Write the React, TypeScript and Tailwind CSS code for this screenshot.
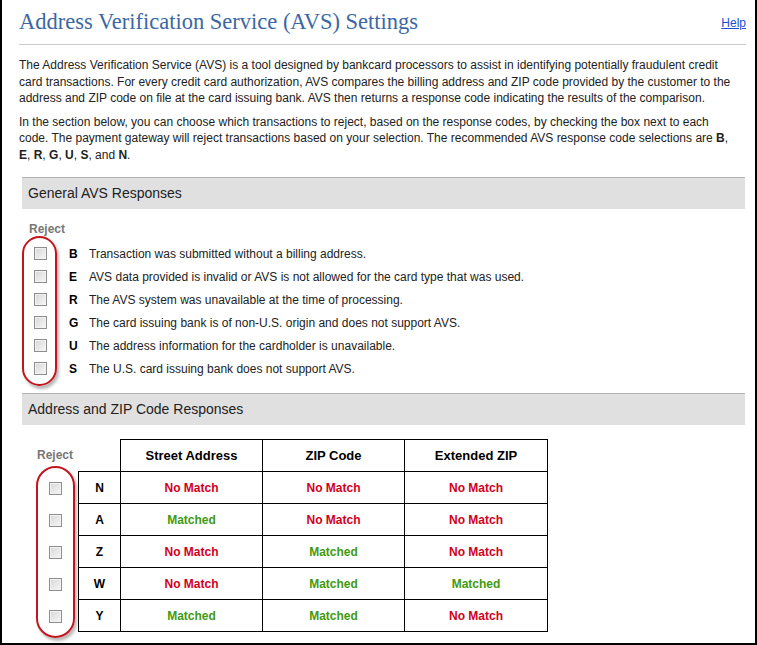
import React from "react";

const general = [
  { code: "B", text: "Transaction was submitted without a billing address." },
  { code: "E", text: "AVS data provided is invalid or AVS is not allowed for the card type that was used." },
  { code: "R", text: "The AVS system was unavailable at the time of processing." },
  { code: "G", text: "The card issuing bank is of non-U.S. origin and does not support AVS." },
  { code: "U", text: "The address information for the cardholder is unavailable." },
  { code: "S", text: "The U.S. card issuing bank does not support AVS." },
];

const zipRows: [string, boolean, boolean, boolean][] = [
  ["N", false, false, false],
  ["A", true, false, false],
  ["Z", false, true, false],
  ["W", false, true, true],
  ["Y", true, true, false],
];

function Box() {
  return (
    <span className="block w-[13px] h-[13px] border border-[#8e8e8e] bg-gradient-to-br from-[#d6d6d6] to-[#f8f8f8] shadow-[inset_0_0_0_1px_#f2f2f2]" />
  );
}

function Result({ ok }: { ok: boolean }) {
  return ok ? (
    <span className="text-[#3f9a12]">Matched</span>
  ) : (
    <span className="text-[#d2001c]">No Match</span>
  );
}

function SectionBar({ title }: { title: string }) {
  return (
    <div className="ml-[3px] mr-[1px] h-[32px] bg-[#e0e0e0] border-t border-[#b4b4b4] flex items-center pl-[6px] text-[14px] text-[#222]">
      {title}
    </div>
  );
}

export default function App() {
  return (
    <div className="w-[757px] h-[645px] overflow-hidden bg-white border-x-2 border-b-2 border-black font-['Liberation_Sans',Arial,sans-serif] text-[12px] text-[#222] pl-[17px] pr-[9px]">
      <div className="flex items-end justify-between pt-[8px] pb-[9px] border-b border-[#cccccc]">
        <h1 className="font-['Liberation_Serif',Georgia,serif] text-[22.5px] leading-[27px] text-[#3b67a4]">
          Address Verification Service (AVS) Settings
        </h1>
        <a href="#" className="text-[12px] text-[#1a4fd0] underline mb-[3px]">Help</a>
      </div>

      <p className="mt-[12px] leading-[16.5px] pr-[10px]">
        The Address Verification Service (AVS) is a tool designed by bankcard processors to assist in identifying potentially fraudulent credit card transactions. For every credit card authorization, AVS compares the billing address and ZIP code provided by the customer to the address and ZIP code on file at the card issuing bank. AVS then returns a response code indicating the results of the comparison.
      </p>
      <p className="mt-[7px] leading-[16.5px] pr-[10px]">
        In the section below, you can choose which transactions to reject, based on the response codes, by checking the box next to each code. The payment gateway will reject transactions based on your selection. The recommended AVS response code selections are <b>B</b>, <b>E</b>, <b>R</b>, <b>G</b>, <b>U</b>, <b>S</b>, and <b>N</b>.
      </p>

      <div className="mt-[14px]">
        <SectionBar title="General AVS Responses" />
      </div>

      <div className="ml-[10px] mt-[12px] text-[#777] font-bold leading-[16px]">Reject</div>
      <div className="flex mt-[-1px]">
        <div className="ml-[3px] w-[35px] py-[4px] rounded-full border-2 border-[#c3161c] shadow-[2px_3px_3px_rgba(0,0,0,0.28)] flex flex-col items-center">
          {general.map((g) => (
            <div key={g.code} className="h-[23px] flex items-center pl-[1px]">
              <Box />
            </div>
          ))}
        </div>
        <div className="flex flex-col py-[6px] ml-[12px]">
          {general.map((g) => (
            <div key={g.code} className="h-[23px] flex items-center">
              <span className="w-[20px] font-bold text-black">{g.code}</span>
              <span>{g.text}</span>
            </div>
          ))}
        </div>
      </div>

      <div className="mt-[7px]">
        <SectionBar title="Address and ZIP Code Responses" />
      </div>

      <div className="flex mt-[14px] ml-[16px]">
        <div className="w-[40px] flex flex-col items-center">
          <div className="h-[32px] flex items-center text-[#777] font-bold">Reject</div>
          <div className="mt-[-5px] w-[39px] py-[4px] rounded-full border-2 border-[#c3161c] shadow-[2px_3px_3px_rgba(0,0,0,0.28)] flex flex-col items-center">
            {zipRows.map((r) => (
              <div key={r[0]} className="h-[32px] flex items-center">
                <Box />
              </div>
            ))}
          </div>
        </div>
        <table className="ml-[3px] border-collapse self-start font-bold">
          <thead>
            <tr className="h-[32px]">
              <th className="w-[42px] border-b border-black"></th>
              <th className="w-[142px] border border-black text-[13px] text-black">Street Address</th>
              <th className="w-[142px] border border-black text-[13px] text-black">ZIP Code</th>
              <th className="w-[143px] border border-black text-[13px] text-black">Extended ZIP</th>
            </tr>
          </thead>
          <tbody>
            {zipRows.map((r) => (
              <tr key={r[0]} className="h-[32px] text-center">
                <td className="border border-black text-black">{r[0]}</td>
                <td className="border border-black"><Result ok={r[1]} /></td>
                <td className="border border-black"><Result ok={r[2]} /></td>
                <td className="border border-black"><Result ok={r[3]} /></td>
              </tr>
            ))}
          </tbody>
        </table>
      </div>
    </div>
  );
}
